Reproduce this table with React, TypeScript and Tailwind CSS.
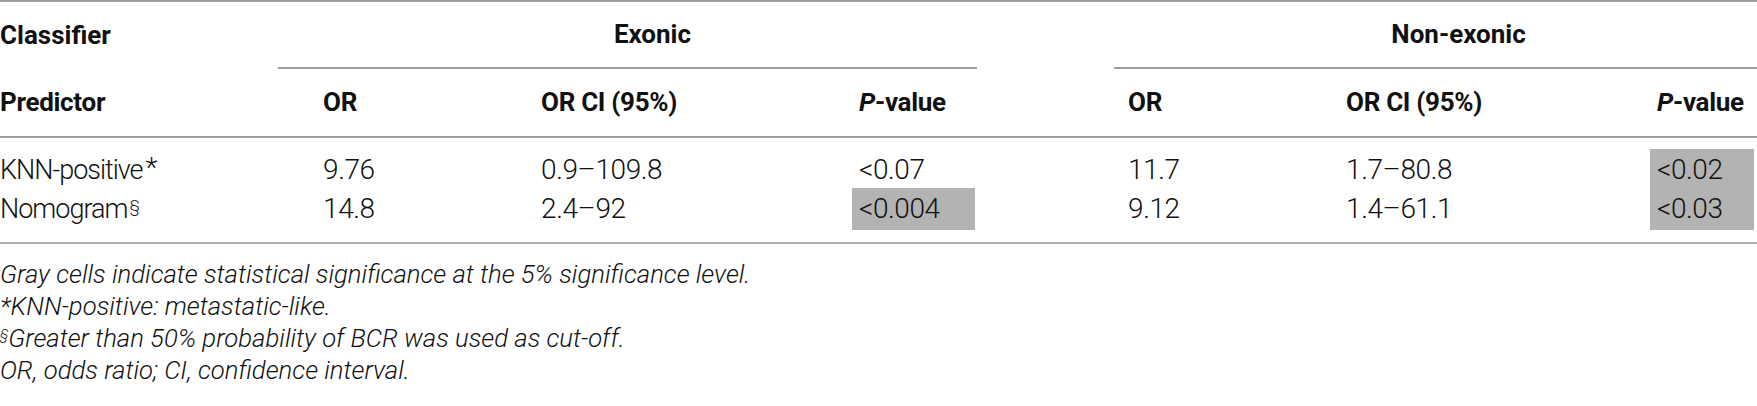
const cols = 'grid grid-cols-[316px_218px_318px_125px_144px_218px_311px_107px]'

const rows = [
  { name: 'KNN-positive', mark: '*', sup: false, or1: '9.76', ci1: '0.9–109.8', p1: '<0.07', g1: false, or2: '11.7', ci2: '1.7–80.8', p2: '<0.02', g2: true },
  { name: 'Nomogram', mark: '§', sup: true, or1: '14.8', ci1: '2.4–92', p1: '<0.004', g1: true, or2: '9.12', ci2: '1.4–61.1', p2: '<0.03', g2: true },
]

function Cell({ children, gray, last }: { children: React.ReactNode; gray?: boolean; last?: boolean }) {
  return (
    <div className={`flex items-center pl-[7px] ${gray ? 'bg-[#b3b3b3]' : ''} ${gray ? (last ? 'mr-[3px]' : 'mr-[2px]') : ''}`}>
      {children}
    </div>
  )
}

export default function App() {
  return (
    <div className="w-[1757px] h-[406px] bg-white text-[#111] font-['Roboto',sans-serif] overflow-hidden">
      <div className="border-t-2 border-[#9d9d9d]">
        {/* group headers */}
        <div className="flex h-[67px] font-bold text-[26px]">
          <div className="w-[278px] flex items-center">Classifier</div>
          <div className="w-[699px] flex items-center justify-center pl-[50px] border-b-2 border-[#9d9d9d]">Exonic</div>
          <div className="w-[137px]" />
          <div className="flex-1 flex items-center justify-center pl-[46px] border-b-2 border-[#9d9d9d]">Non-exonic</div>
        </div>

        {/* column headers */}
        <div className={`${cols} h-[69px] font-bold text-[26px] tracking-[-0.3px] border-b-2 border-[#9d9d9d]`}>
          <div className="flex items-center">Predictor</div>
          <Cell>OR</Cell>
          <Cell>OR CI (95%)</Cell>
          <Cell><i>P</i>-value</Cell>
          <div />
          <Cell>OR</Cell>
          <Cell>OR CI (95%)</Cell>
          <Cell><i>P</i>-value</Cell>
        </div>

        {/* data */}
        <div className="pt-[11px] pb-[14px] border-b-2 border-[#b0b0b0] font-light text-[28px] tracking-[-0.4px]">
          {rows.map((r, i) => (
            <div key={r.name} className={`${cols} ${i === 0 ? 'h-[39px]' : 'h-[40px]'}`}>
              <div className="flex items-center">
                <span className="text-[27px] tracking-[-1px]">{r.name}</span>
                {r.sup ? <sup className="text-[17px] relative top-[-3px] ml-[2px]">{r.mark}</sup> : <span className="ml-[3px] relative top-[-2px]">{r.mark}</span>}
              </div>
              <Cell>{r.or1}</Cell>
              <Cell>{r.ci1}</Cell>
              <Cell gray={r.g1}>{r.p1}</Cell>
              <div />
              <Cell>{r.or2}</Cell>
              <Cell>{r.ci2}</Cell>
              <Cell gray={r.g2} last>{r.p2}</Cell>
            </div>
          ))}
        </div>

        {/* notes */}
        <div className="pt-[14px] font-light italic text-[25.7px] leading-[32px]">
          <p>Gray cells indicate statistical significance at the 5% significance level.</p>
          <p>*KNN-positive: metastatic-like.</p>
          <p><sup className="text-[14px]">§</sup>Greater than 50% probability of BCR was used as cut-off.</p>
          <p>OR, odds ratio; CI, confidence interval.</p>
        </div>
      </div>
    </div>
  )
}
